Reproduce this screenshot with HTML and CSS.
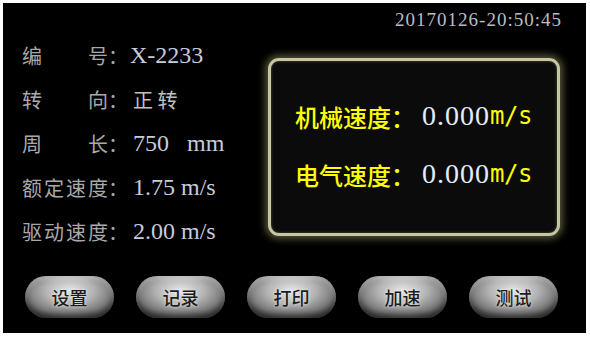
FILE: index.html
```html
<!DOCTYPE html>
<html>
<head>
	<meta charset="UTF-8">
	<title>速度监测</title>
	<link rel="stylesheet" href="styles.css">
</head>
<body>
<div class="screen">
	<div class="entete">
		<span class="horloge">20170126-20:50:45</span>
	</div>

	<div class="milieu">
		<ul class="infos">
			<li><span class="lib">编号</span><span class="pts">：</span><span class="val">X-2233</span></li>
			<li><span class="lib">转向</span><span class="pts">：</span><span class="val cjk">正 转</span></li>
			<li><span class="lib">周长</span><span class="pts">：</span><span class="val">750&nbsp;&nbsp;&nbsp;mm</span></li>
			<li><span class="lib">额定速度</span><span class="pts">：</span><span class="val">1.75 m/s</span></li>
			<li><span class="lib">驱动速度</span><span class="pts">：</span><span class="val">2.00 m/s</span></li>
		</ul>

		<div class="panneau">
			<div class="mesure"><span class="nom">机械速度：</span><span class="chiffre">0.000</span><span class="unite">m/s</span></div>
			<div class="mesure"><span class="nom">电气速度：</span><span class="chiffre">0.000</span><span class="unite">m/s</span></div>
		</div>
	</div>

	<div class="boutons">
		<button class="btn">设置</button>
		<button class="btn">记录</button>
		<button class="btn">打印</button>
		<button class="btn">加速</button>
		<button class="btn">测试</button>
	</div>
</div>
</body>
</html>
```

FILE: styles.css
```css
body {
	margin: 0;
	background: #fff;
	font-family: "Noto Sans CJK SC", sans-serif;
}

.screen {
	margin: 3px;
	width: 583px;
	height: 330px;
	background: #000;
	display: flex;
	flex-direction: column;
}

.entete {
	height: 30px;
	display: flex;
	justify-content: flex-end;
	align-items: center;
	padding: 3px 24px 0 0;
	box-sizing: border-box;
}

.horloge {
	font-family: "Liberation Serif", serif;
	font-size: 19px;
	letter-spacing: 1px;
	color: #b8bcc8;
}

.milieu {
	height: 240px;
	display: flex;
}

.infos {
	list-style: none;
	margin: 0;
	padding: 0 0 0 19px;
	width: 246px;
}

.infos li {
	height: 44px;
	display: flex;
	align-items: center;
	color: #a9a9a9;
	font-size: 20px;
}

.lib {
	display: inline-block;
	width: 86px;
	text-align: justify;
	text-align-last: justify;
}

.pts {
	width: 20px;
	margin-right: 2px;
}

.val {
	font-family: "Liberation Serif", serif;
	font-size: 24px;
	color: #c6ccdc;
	white-space: pre;
	margin-left: 3px;
}

.infos li:first-child .val {
	margin-left: 0;
}

.val.cjk {
	font-family: "Noto Sans CJK SC", sans-serif;
	font-size: 20px;
	color: #c0c0c0;
}

.panneau {
	margin-top: 25px;
	width: 292px;
	height: 178px;
	box-sizing: border-box;
	border: 3px solid #c6c6a2;
	border-radius: 11px;
	background: #0b0b0b;
	box-shadow: 0 0 7px 3px rgba(150, 150, 100, 0.55), inset 0 0 3px rgba(200, 200, 150, 0.4);
	padding: 39px 0 0 24px;
}

.mesure {
	height: 32px;
	display: flex;
	align-items: center;
	margin-bottom: 26px;
	white-space: nowrap;
}

.nom {
	color: #ffff00;
	font-size: 24px;
	font-weight: 500;
}

.chiffre {
	font-family: "Liberation Serif", serif;
	font-size: 28px;
	letter-spacing: 1px;
	color: #e4ecff;
	margin-left: 7px;
}

.unite {
	font-family: "DejaVu Sans Mono", monospace;
	font-size: 24px;
	color: #ffff00;
	letter-spacing: -0.5px;
}

.boutons {
	margin-top: 3px;
	display: flex;
	justify-content: space-between;
	padding: 0 28px 0 22px;
}

.btn {
	width: 89px;
	height: 42px;
	border: none;
	border-radius: 21px;
	background: radial-gradient(ellipse 60% 70% at 50% 35%, #e6e6e6 0%, #b4b4b4 45%, #7a7a7a 80%, #4a4a4a 100%);
	box-shadow: inset 0 -4px 6px rgba(0, 0, 0, 0.45), inset 0 3px 4px rgba(255, 255, 255, 0.35);
	font-family: "Noto Sans CJK SC", sans-serif;
	font-size: 18px;
	font-weight: 500;
	color: #1c1c1c;
	text-shadow: 0 0 3px rgba(255, 255, 255, 0.8);
	padding: 0;
	cursor: pointer;
}
```
